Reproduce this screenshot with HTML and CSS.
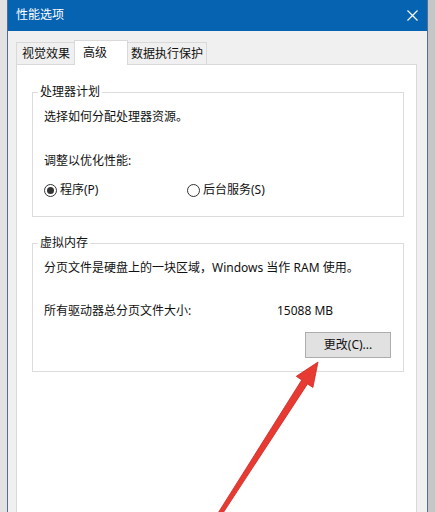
FILE: index.html
```html
<!DOCTYPE html>
<html lang="zh-CN">
<head>
<meta charset="utf-8">
<title>性能选项</title>
<link rel="stylesheet" href="styles.css">
</head>
<body>
<div class="window">
  <div class="titlebar">
    <span class="title">性能选项</span>
    <span class="close">
      <svg width="11" height="11" viewBox="0 0 11 11"><path d="M0.5 0.5 L10.5 10.5 M10.5 0.5 L0.5 10.5" stroke="#fff" stroke-width="1.2" fill="none"/></svg>
    </span>
  </div>
  <div class="dialog">
    <div class="tabs">
      <div class="tab t1">视觉效果</div>
      <div class="tab t2 sel">高级</div>
      <div class="tab t3">数据执行保护</div>
    </div>
    <div class="panel">
      <div class="group g1">
        <span class="legend">处理器计划</span>
        <div class="row">选择如何分配处理器资源。</div>
        <div class="row r2">调整以优化性能:</div>
        <div class="row radios">
          <span class="radio on"></span><span class="lbl l1">程序(P)</span>
          <span class="radio"></span><span class="lbl">后台服务(S)</span>
        </div>
      </div>
      <div class="group g2">
        <span class="legend">虚拟内存</span>
        <div class="row">分页文件是硬盘上的一块区域，Windows 当作 RAM 使用。</div>
        <div class="row r2 size"><span class="klabel">所有驱动器总分页文件大小:</span><span>15088 MB</span></div>
        <div class="btnrow"><button class="btn">更改(C)...</button></div>
      </div>
    </div>
  </div>
</div>
<svg class="arrow" width="435" height="512" viewBox="0 0 435 512">
  <polygon points="213,521 216.5,523 307.5,383.9 312.9,387.5 318,362 296.3,376.3 301.7,380" fill="#e63a32" stroke="#cf2a25" stroke-width="0.8" stroke-linejoin="round"/>
</svg>
</body>
</html>
```
FILE: styles.css
```css
html, body {
  margin: 0;
  padding: 0;
}
body {
  width: 435px;
  height: 512px;
  overflow: hidden;
  background: linear-gradient(to right, #e2e2e2 50%, #c6c6c6 50%);
  font-family: "Noto Sans", "Noto Sans CJK SC", sans-serif;
  font-size: 12px;
  color: #111;
  position: relative;
}
.window {
  margin-left: 7px;
  width: 421px;
  height: 512px;
  box-sizing: border-box;
  border-left: 1px solid #536f8c;
  border-right: 1px solid #536f8c;
  background: #f0f0f0;
}
.titlebar {
  height: 31px;
  background: #0663b2;
  color: #fff;
  display: flex;
  align-items: center;
  justify-content: space-between;
  padding-left: 8px;
}
.title {
  line-height: 16px;
  margin-top: -1px;
}
.close {
  width: 30px;
  height: 31px;
  display: flex;
  align-items: center;
  justify-content: center;
}
.dialog {
  padding: 9px 10px 0 8px;
}
.tabs {
  display: flex;
  align-items: flex-end;
  height: 24px;
}
.tab {
  box-sizing: border-box;
  height: 22px;
  line-height: 21px;
  border: 1px solid #d9d9d9;
  border-bottom: none;
  background: #f0f0f0;
  white-space: nowrap;
}
.t1 {
  width: 60px;
  padding-left: 5px;
}
.t2 {
  width: 54px;
  padding-left: 8px;
}
.t3 {
  width: 81px;
  padding-left: 4px;
}
.tab.sel {
  height: 25px;
  line-height: 23px;
  background: #fff;
  margin: 0 -2px -1px -2px;
  position: relative;
  z-index: 1;
}
.panel {
  box-sizing: border-box;
  width: 401px;
  height: 460px;
  background: #fff;
  border: 1px solid #d9d9d9;
  padding: 27px 12px 0 15px;
}
.group {
  position: relative;
  border: 1px solid #dcdcdc;
  padding: 16px 0 0 11px;
}
.legend {
  position: absolute;
  top: -9px;
  left: 5px;
  padding: 0 2px;
  background: #fff;
  line-height: 16px;
}
.row {
  line-height: 16px;
  height: 16px;
  white-space: nowrap;
}
.r2 {
  margin-top: 28px;
}
.radios {
  margin-top: 13px;
  display: flex;
  align-items: center;
}
.g1 {
  box-sizing: border-box;
  height: 125px;
}
.radio {
  box-sizing: border-box;
  width: 13px;
  height: 13px;
  border: 1px solid #333;
  border-radius: 50%;
  display: flex;
  align-items: center;
  justify-content: center;
  margin-right: 3px;
}
.radio.on::after {
  content: "";
  width: 7px;
  height: 7px;
  border-radius: 50%;
  background: #333;
}
.l1 {
  width: 127px;
}
.g2 {
  margin-top: 26px;
  padding-bottom: 13px;
}
.size {
  margin-top: 27px;
  display: flex;
}
.klabel {
  width: 233px;
}
.btnrow {
  margin-top: 13px;
  display: flex;
  justify-content: flex-end;
  padding-right: 12px;
}
.btn {
  width: 86px;
  height: 26px;
  box-sizing: border-box;
  background: #e1e1e1;
  border: 1px solid #adadad;
  font: inherit;
  color: inherit;
  padding: 0;
  line-height: 22px;
}
.arrow {
  position: absolute;
  left: 0;
  top: 0;
  pointer-events: none;
}
```
